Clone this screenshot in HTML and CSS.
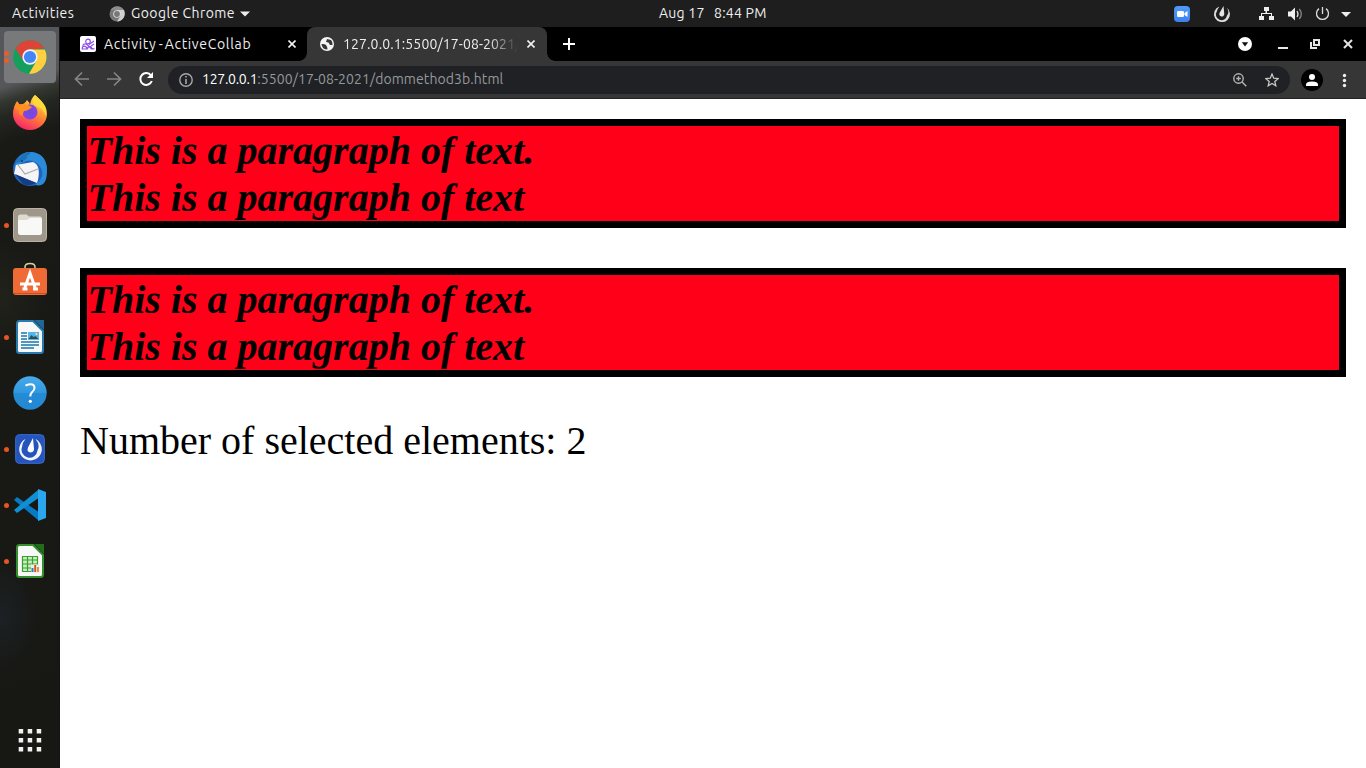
FILE: index.html
```html
<!DOCTYPE html>
<html lang="en">
<head>
<meta charset="utf-8">
<title>Desktop</title>
<link rel="stylesheet" href="styles.css">
</head>
<body>
<header class="topbar">
  <span class="activities">Activities</span>
  <div class="appmenu">
    <svg width="16" height="16" viewBox="0 0 16 16"><circle cx="8" cy="8" r="7.5" fill="#777"/><path d="M8 4h7A8 8 0 0 1 8 15.5L11.5 10z" fill="#d0d0d0"/><path d="M1.5 4A8 8 0 0 1 15 4H8z" fill="#8c8c8c"/><circle cx="8" cy="8" r="3.8" fill="#ddd"/><circle cx="8" cy="8" r="2.9" fill="#777"/></svg>
    <span class="appname">Google Chrome</span>
    <svg class="caret" width="10" height="6" viewBox="0 0 10 6"><path d="M0 .5h10L5 5.5z" fill="#eee"/></svg>
  </div>
  <div class="clock"><span class="date">Aug 17</span><span class="time">8:44 PM</span></div>
  <svg class="tray" width="192" height="26" viewBox="1174 0 192 26">
    <defs><linearGradient id="zm" x2="0" y2="1"><stop stop-color="#4f9bfa"/><stop offset="1" stop-color="#3d80ef"/></linearGradient></defs>
    <rect x="1174" y="5" width="16" height="16" rx="4" fill="url(#zm)"/><rect x="1177" y="10" width="7" height="6" rx="1.3" fill="#fff"/><path d="M1184.5 12l3-2v6l-3-2z" fill="#fff"/>
    <path d="M1219.500 5.500A8 8 0 1 0 1226.500 6.500Q1230 11 1227 14.500A5.600 5.600 0 1 1 1216.800 10.500Q1217.300 8 1219.500 5.500z" fill="#ddd"/><path d="M1223.500 5L1219.500 12A2.500 2.500 0 1 0 1224.300 13z" fill="#e5e5e5"/>
    <path d="M1264 6h5v4h-2v2h5v3h2v4h-5v-4h2v-2h-9v2h2v4h-5v-4h2v-3h4.500v-2h-1.500z" fill="#eee"/>
    <path d="M1288 10.500h3l4-4v13l-4-4h-3z" fill="#f0f0f0"/><path d="M1297 10q2 3 0 6" fill="none" stroke="#ddd" stroke-width="1.300"/><path d="M1299.300 8q4 5 0 10" fill="none" stroke="#888" stroke-width="1.300"/>
    <path d="M1319 7.600a6 6 0 1 0 7 0M1322.500 6v7" fill="none" stroke="#ddd" stroke-width="1.300"/>
    <path d="M1341 11h10l-5 5z" fill="#eee"/>
  </svg>
</header>
<div class="desktop">
<nav class="dock">
  <div class="app focused"><svg width="34" height="34" viewBox="-17 -17 34 34"><circle r="16.800" fill="#159f5c"/><path d="M-14.500-8.400A16.800 16.800 0 0 1 14.500-8.400L0-7.600-6.500 4z" fill="#dc4437"/><path d="M0-7.600H14.700A16.800 16.800 0 0 1-1 16.800L6.600 3.800z" fill="#fecf41"/><circle r="7.700" fill="#f1f1f1"/><circle r="6.100" fill="#4285f4"/></svg></div>
  <div class="app"><svg width="36" height="36" viewBox="-18 -18 36 36"><defs><linearGradient id="fx" x1=".8" x2=".3" y2="1"><stop offset=".1" stop-color="#ffe344"/><stop offset=".5" stop-color="#ff8a30"/><stop offset="1" stop-color="#f8206d"/></linearGradient><radialGradient id="fp"><stop stop-color="#6750d8"/><stop offset="1" stop-color="#8c41e7"/></radialGradient></defs><path d="M5-18C10-13 17-9 17 1a17 16 0 0 1-34 0Q-17-6-13-12l3 4Q-5-9-3-13 0-10 0-8 1-15 5-18z" fill="url(#fx)"/><circle r="7.500" cy="-1" fill="url(#fp)"/><path d="M-16-6q5-5 14-2l4 2q-4 4-8 4l-2 5q-4-2-3-5z" fill="#ff8e23"/><path d="M5-18C10-13 17-9 16 3q-2-7-8-9Q0-9 5-18z" fill="#ffdb3a"/></svg></div>
  <div class="app"><svg width="36" height="36" viewBox="-18 -18 36 36"><circle r="17" fill="#1f63bd"/><path d="M-16 0Q-12-18 2-17 17-15 17 2T5 16Q18 6 8-5-2-14-16 0z" fill="#2b8bd8"/><path d="M-14-4L3-7Q11-4 8 11L7 14-16 5z" fill="#f5f5f6"/><path d="M-12-4L-5 5 8 0" fill="none" stroke="#aaa" stroke-width="1.200"/><path d="M-14-6Q-9-16-1-17 3-17-3-13-1-9-14-6z" fill="#1e72b7"/><circle cx="-8" cy="-8" r="1" fill="#123968"/><path d="M-15 5L6 14Q-1 18-7 15z" fill="#163d80"/></svg></div>
  <div class="app run"><svg width="34" height="34"><rect x=".5" y=".5" width="33" height="33" rx="4" fill="#9f988a" stroke="#b9b3a5"/><path d="M5 9q0-2.500 2.500-2.500h6l2.500 2h11q2 0 2 2V24q0 3-3 3H8q-3 0-3-3z" fill="#dedbd1"/><path d="M5 12h9l3-2h10q2 0 2 2v12q0 3-3 3H8q-3 0-3-3z" fill="#f8f8f7"/></svg></div>
  <div class="app bag"><svg width="34" height="34"><path d="M12 8V5q0-3.500 5-3.500T22 5v3" fill="none" stroke="#d9cf9f" stroke-width="1.500"/><rect y="6" width="34" height="27" rx="3" fill="#f06a36"/><path d="M1 31.500h32" stroke="#ce4e23"/><path d="M11.500 27L17 11l5.500 16M7 22h20M9.500 27h5M20 27h5" fill="none" stroke="#fff" stroke-width="3"/></svg></div>
  <div class="app run"><svg width="28" height="34"><path d="M3.500 1H17l10 10v19.500q0 2.500-2.500 2.500h-21Q1 33 1 30.500v-27Q1 1 3.500 1z" fill="#f8f8f8" stroke="#277bb1" stroke-width="2"/><path d="M18 0h10v10z" fill="#1e6896"/><path d="M5 13h6M5 16h6M5 19h6M5 22h18M5 25h18M5 28h13" stroke="#1875aa" stroke-width="1.400"/><path d="M12 12h11v8H12z" fill="#56b5e8"/><path d="M12.500 19l3-4 2 2 2-1 3 3z" fill="#374d50"/><circle cx="20.500" cy="14" r="1" fill="#fff18b"/></svg></div>
  <div class="app"><svg width="34" height="34"><defs><linearGradient id="hp" x2="0" y2="1"><stop stop-color="#47aaea"/><stop offset=".5" stop-color="#3097df"/><stop offset=".51" stop-color="#248bd5"/><stop offset="1" stop-color="#2488d2"/></linearGradient></defs><circle cx="17" cy="17" r="16.700" fill="url(#hp)"/><path d="M12.500 9.500q9-3.200 9 2.500 0 2-2.500 4.200-1.700 1.500-1.700 4.300" fill="none" stroke="#fff" stroke-width="2"/><circle cx="17.300" cy="25.300" r="1.600" fill="#fff"/></svg></div>
  <div class="app run"><svg width="30" height="30"><rect x=".7" y=".7" width="28.600" height="28.600" rx="4" fill="#2554bd" stroke="#3970d3"/><path d="M10.500 5A11.300 11.300 0 1 0 20.500 5Q25.500 11 22.500 16.500A8 8 0 1 1 7 13Q7 9 10.500 5z" fill="#f2f5fa"/><path d="M18 4L13 13.500Q11.500 18 15.500 18.500 20 18 18.800 13z" fill="#fff"/></svg></div>
  <div class="app run"><svg class="code" width="32" height="32"><path d="M0 11L3 8 26 24v7H24z" fill="#0879c5"/><path d="M0 21l3 3L26 8V1H24z" fill="#118fd5"/><path d="M24 0l8 3v26l-8 3z" fill="#2aa7ef"/></svg></div>
  <div class="app run"><svg width="28" height="34"><path d="M3.500 1H17l10 10v19.500q0 2.500-2.500 2.500h-21Q1 33 1 30.500v-27Q1 1 3.500 1z" fill="#f8f8f8" stroke="#34902c" stroke-width="2"/><path d="M18 0h10v10z" fill="#226d19"/><path d="M6.500 12.500h15v15h-15zM6.500 16h15M6.500 20h15M6.500 24h15M11.500 12v16M16.500 12v16" fill="#c9edc3" stroke="#38a028" stroke-width="1.200"/><path d="M15 20.500h8.500v8H15z" fill="#eee"/><path d="M16.500 28v-4" stroke="#2780c3" stroke-width="2"/><path d="M19.200 28v-7" stroke="#dd5320" stroke-width="2"/><path d="M22 28v-5" stroke="#dd9540" stroke-width="2"/></svg></div>
  <svg class="grid" width="24" height="24" fill="#f2f2f2"><path d="M.7 0h4.500v4.500H.7zM9.700 0h4.500v4.500H9.700zM18.700 0h4.500v4.500h-4.500zM.7 9h4.500v4.500H.7zM9.700 9h4.500v4.500H9.700zM18.700 9h4.500v4.500h-4.500zM.7 18h4.500v4.500H.7zM9.700 18h4.500v4.500H9.700zM18.700 18h4.500v4.500h-4.500z"/></svg>
</nav>
<main class="browser">
  <div class="tabs">
    <div class="tab back">
      <svg width="16" height="16"><rect width="16" height="16" rx="2" fill="#fff"/><g fill="none" stroke="#8c4de8" stroke-width="1.200"><circle cx="8" cy="5.500" r="2.300"/><path d="M2.200 13q0-2.800 2-2.800t3 2.800zM7.500 12.500q1.500-3.500 3.500-1.500 2 2.500 3.500 1.500M2.500 9.500Q4.500 7 7 8.500l4.500 4.500h2.500M9 8.500l5-3.500M11 10l3-2"/></g></svg>
      <span class="title one">Activity<span class="dash"> - </span>ActiveCollab</span>
      <svg class="x" width="8" height="8"><path d="M.5.500l7 7m0-7l-7 7" stroke="#f1f1f1" stroke-width="1.600"/></svg>
    </div>
    <div class="tab front">
      <svg width="14" height="14"><circle cx="7" cy="7" r="7" fill="#f4f4f4"/><path d="M1.500 7q3-.5 4.500 1t1.500 4.500Q2 12.500 1.500 7zM7 2l4 1q2 2 1.500 5L10 8 8.500 5.500 6 5z" fill="#363636"/></svg>
      <span class="title two">127.0.0.1:5500/17-08-2021/</span>
      <svg class="x" width="8" height="8"><path d="M.5.500l7 7m0-7l-7 7" stroke="#f1f1f1" stroke-width="1.600"/></svg>
    </div>
    <svg class="plus" width="12" height="12"><path d="M6 0v12M0 6h12" stroke="#fff" stroke-width="2"/></svg>
    <svg class="wm" width="128" height="34" viewBox="1238 27 128 34"><circle cx="1245" cy="44" r="7" fill="#fff"/><path d="M1241.800 42.300h6.400L1245 46.500z" fill="#111"/><path d="M1278 48h10" stroke="#e7e7e7" stroke-width="2"/><path d="M1314 40h5v5h-5zM1311 42v6h6" fill="none" stroke="#e3e3e3" stroke-width="2"/><path d="M1344 40l8 8m0-8l-8 8" stroke="#e3e3e3" stroke-width="2"/></svg>
  </div>
  <div class="toolbar">
    <svg width="94" height="37" viewBox="0 0 94 37" fill="none" stroke="#858585" stroke-width="1.700"><path d="M29 18H16M22 11.500L15.500 18l6.500 6.500M47 18h13M54 11.500l6.500 6.500-6.500 6.500"/><path d="M91 14.500A5.900 5.900 0 1 0 91.800 20" stroke="#fff" stroke-width="2"/><path d="M93 11v6h-6z" fill="#fff" stroke="none"/></svg>
    <div class="omni">
      <svg width="14" height="14"><circle cx="7" cy="7" r="6.200" fill="none" stroke="#a5a7aa" stroke-width="1.400"/><path d="M7 3v1.600M7 6v5" stroke="#a5a7aa" stroke-width="1.600"/></svg>
      <span class="url"><b>127.0.0.1</b><span class="path">:5500/17-08-2021/dommethod3b.html</span></span>
      <svg class="mag" width="14" height="14" fill="none" stroke="#b4b4b4" stroke-width="1.400"><circle cx="5.500" cy="5.500" r="4.700"/><path d="M9 9l4.300 4.300M3.200 5.500h4.600M5.500 3.200v4.600"/></svg>
      <svg width="14" height="14"><path d="M7 1l1.700 4.200 4.500.4-3.400 2.900 1 4.300L7 10.500l-3.800 2.300 1-4.300L.8 5.600l4.500-.4z" fill="none" stroke="#c5c5c5" stroke-width="1.300"/></svg>
    </div>
    <svg class="user" width="66" height="28" viewBox="1300 65 66 28"><circle cx="1312" cy="79" r="11" fill="#000"/><circle cx="1312" cy="76" r="3" fill="#fff"/><path d="M1306 85v-1.500q0-3 6-3t6 3V85z" fill="#fff"/><g fill="#eee"><circle cx="1344.500" cy="74.500" r="1.700"/><circle cx="1344.500" cy="79.500" r="1.700"/><circle cx="1344.500" cy="84.500" r="1.700"/></g></svg>
  </div>
  <article class="page">
    <p class="box">This is a paragraph of text.<br>This is a paragraph of text</p>
    <p class="box">This is a paragraph of text.<br>This is a paragraph of text</p>
    <div class="count">Number of selected elements: 2</div>
  </article>
</main>
</div>
</body>
</html>
```
FILE: styles.css
```css
* { box-sizing: border-box; }
body { margin: 0; width: 1366px; height: 768px; overflow: hidden; font: 14px/20px "Ubuntu", "Noto Sans", sans-serif; color: #eee; white-space: nowrap; }
svg { display: block; flex: none; }
.topbar { height: 27px; background: #1e1e1e; display: grid; grid-template-columns: 109px 550px 515px 192px; align-items: center; }
.activities { padding-left: 12px; letter-spacing: .5px; }
.appmenu { display: flex; align-items: center; }
.appname { width: 104px; margin-left: 6px; letter-spacing: .45px; }
.activities, .appname, .clock { padding-bottom: 1px; }
.caret { margin-left: 5px; }
.clock { display: flex; gap: 10px; letter-spacing: .25px; }
.date { width: 45px; }
.desktop { display: flex; height: 741px; }
.dock { width: 60px; padding-top: 4px; display: flex; flex-direction: column; align-items: center; gap: 4px; border-right: 1px solid #151412; background: radial-gradient(ellipse 45px 55px at 0 270px, #20221a, transparent), radial-gradient(ellipse 40px 60px at 0 590px, #1c2124, transparent), linear-gradient(162deg, #54575b 0, #55575a 58px, #343630 72px, #242621 86px, #191a16 112px, #171714 100%); }
.app { width: 52px; height: 52px; flex: none; display: flex; align-items: center; justify-content: center; position: relative; }
.focused { background: #77797b; border-radius: 4px; }
.run::before { content: ""; position: absolute; left: 0; top: 24px; width: 5px; height: 5px; border-radius: 50%; background: #e95420; }
.focused::before { content: ""; position: absolute; left: 0; top: 20px; width: 5px; height: 5px; border-radius: 50%; background: #f05a26; box-shadow: 0 7px #f05a26; }
.bag { padding-bottom: 4px; }
.grid { margin: auto 0 15px; }
.browser { flex: 1; background: #fff; display: flex; flex-direction: column; }
.tabs { height: 34px; background: #000; display: flex; align-items: center; }
.tab { height: 34px; display: flex; align-items: center; }
.back { width: 247px; padding-left: 20px; }
.front { width: 240px; padding-left: 13px; background: #363636; border-radius: 8px 8px 0 0; position: relative; }
.front::before, .front::after { content: ""; position: absolute; bottom: 0; width: 8px; height: 8px; }
.front::before { left: -8px; background: radial-gradient(circle at 0 0, transparent 7.5px, #363636 8px); }
.front::after { right: -8px; background: radial-gradient(circle at 100% 0, transparent 7.5px, #363636 8px); }
.one { margin-left: 8px; width: 184px; letter-spacing: .67px; }
.dash { letter-spacing: -.7px; }
.two { margin-left: 9px; width: 175px; overflow: hidden; letter-spacing: .12px; -webkit-mask-image: linear-gradient(90deg, #000 145px, transparent 175px); mask-image: linear-gradient(90deg, #000 145px, transparent 175px); }
.two + .x { margin-left: 9px; }
.plus { margin-left: 16px; }
.wm { margin-left: auto; }
.toolbar { height: 38px; flex: none; background: #363636; border-bottom: 1px solid #242424; display: flex; align-items: center; }
.omni { width: 1122px; height: 28px; margin-left: 14px; padding: 0 11px; border-radius: 14px; background: #202124; display: flex; align-items: center; }
.url { margin-left: 9px; padding-bottom: 2px; letter-spacing: -.27px; }
.url b { font-weight: 400; color: #fff; }
.path { color: #95999c; letter-spacing: .08px; }
.mag { margin-left: auto; margin-right: 18px; }
.user { margin-left: auto; }
.page { padding: 20px 20px 0; color: #000; font-family: "Liberation Serif", "Times New Roman", serif; font-size: 40px; line-height: 47px; }
.box { height: 109px; margin: 0 0 40px; border: 7px solid #000; padding: 1px .5px; background: #ff0018; font-weight: bold; font-style: italic; }
.count { height: 47px; }
```
